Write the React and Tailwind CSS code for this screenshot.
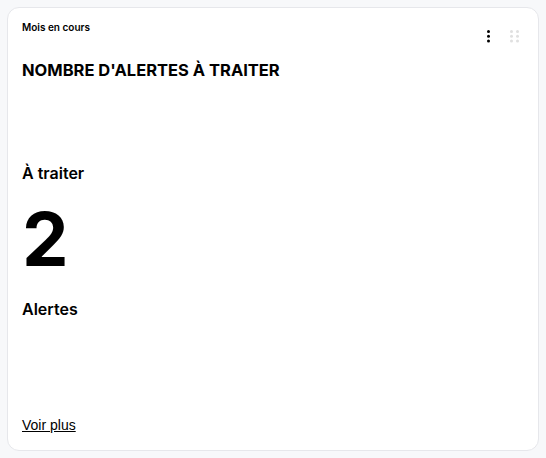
export default function App() {
  return (
    <div className="w-[546px] h-[458px] bg-[#f7f8fa] p-[7px]" style={{ fontFamily: "Inter, 'Noto Sans', sans-serif" }}>
      <div className="h-full bg-white border border-[#e6e7eb] rounded-[12px] px-[14px] pt-[13px] pb-[14px] flex flex-col text-black">
        <div className="flex justify-between items-start">
          <div className="flex flex-col">
            <div className="text-[10px] leading-[12px] font-semibold">Mois en cours</div>
            <div className="mt-[25px] text-[16.5px] leading-[24px] font-bold">NOMBRE D'ALERTES À TRAITER</div>
          </div>
          <div className="flex items-center gap-[20px] mt-[9px] mr-[5px]">
            <svg width="3" height="13" viewBox="0 0 3 13">
              <circle cx="1.5" cy="1.6" r="1.5" fill="#000" />
              <circle cx="1.5" cy="6.3" r="1.5" fill="#000" />
              <circle cx="1.5" cy="11" r="1.5" fill="#000" />
            </svg>
            <svg width="9" height="13" viewBox="0 0 9 13">
              <circle cx="1.5" cy="1.6" r="1.5" fill="#e0e0e0" />
              <circle cx="7.5" cy="1.6" r="1.5" fill="#e0e0e0" />
              <circle cx="1.5" cy="6.3" r="1.5" fill="#e0e0e0" />
              <circle cx="7.5" cy="6.3" r="1.5" fill="#e0e0e0" />
              <circle cx="1.5" cy="11" r="1.5" fill="#e0e0e0" />
              <circle cx="7.5" cy="11" r="1.5" fill="#e0e0e0" />
            </svg>
          </div>
        </div>
        <div className="mt-[79px] text-[16px] leading-[24px] font-semibold">À traiter</div>
        <div className="mt-[17px] text-[74px] leading-[74px] font-bold">2</div>
        <div className="mt-[21px] text-[16px] leading-[24px] font-semibold">Alertes</div>
        <div className="mt-auto">
          <a href="#" className="text-[14px] leading-[16px] underline text-black" style={{ fontFamily: "'Liberation Sans', Arial, sans-serif" }}>Voir plus</a>
        </div>
      </div>
    </div>
  );
}
